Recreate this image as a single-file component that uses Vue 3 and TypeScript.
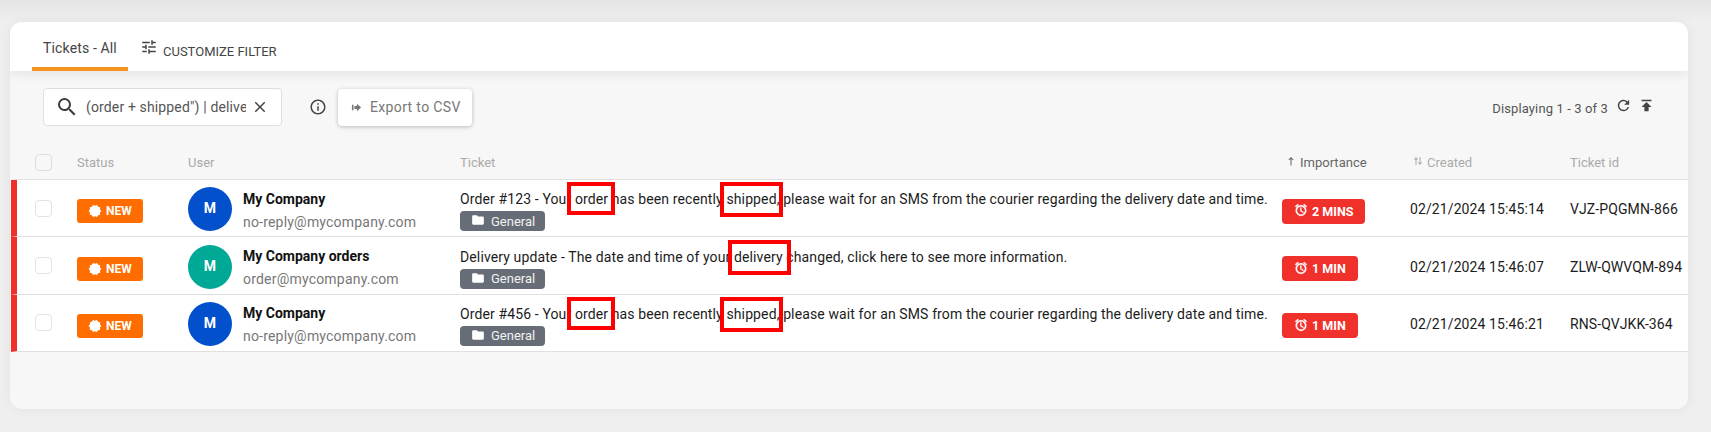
<script setup lang="ts">
type HitKind = 'order' | 'shipped' | 'delivery'

interface Part {
  text: string
  hit?: HitKind
}

interface Ticket {
  id: string
  name: string
  email: string
  color: string
  parts: Part[]
  wait: string
  created: string
}

const shippedTail = ' please wait for an SMS from the courier regarding the delivery date and time.'

const tickets: Ticket[] = [
  {
    id: 'VJZ-PQGMN-866',
    name: 'My Company',
    email: 'no-reply@mycompany.com',
    color: '#0250cc',
    parts: [
      { text: 'Order #123 - Your ' },
      { text: 'order', hit: 'order' },
      { text: ' has been recently ' },
      { text: 'shipped,', hit: 'shipped' },
      { text: shippedTail }
    ],
    wait: '2 MINS',
    created: '02/21/2024 15:45:14'
  },
  {
    id: 'ZLW-QWVQM-894',
    name: 'My Company orders',
    email: 'order@mycompany.com',
    color: '#00a896',
    parts: [
      { text: 'Delivery update - The date and time of your ' },
      { text: 'delivery', hit: 'delivery' },
      { text: ' changed, click here to see more information.' }
    ],
    wait: '1 MIN',
    created: '02/21/2024 15:46:07'
  },
  {
    id: 'RNS-QVJKK-364',
    name: 'My Company',
    email: 'no-reply@mycompany.com',
    color: '#0250cc',
    parts: [
      { text: 'Order #456 - Your ' },
      { text: 'order', hit: 'order' },
      { text: ' has been recently ' },
      { text: 'shipped,', hit: 'shipped' },
      { text: shippedTail }
    ],
    wait: '1 MIN',
    created: '02/21/2024 15:46:21'
  }
]
</script>

<template>
  <div class="page">
    <div class="card">
      <div class="tabs">
        <div class="tab">Tickets - All</div>
        <div class="filter">
          <svg class="filter-icon" viewBox="0 0 24 24"><path d="M3 17v2h6v-2H3zM3 5v2h10V5H3zm10 16v-2h8v-2h-8v-2h-2v6h2zM7 9v2H3v2h4v2h2V9H7zm14 4v-2H11v2h10zm-6-4h2V7h4V5h-4V3h-2v6z" /></svg>
          <span>CUSTOMIZE FILTER</span>
        </div>
      </div>

      <div class="toolbar">
        <div class="search">
          <svg class="search-icon" viewBox="0 0 24 24"><path d="M15.5 14h-.79l-.28-.27A6.471 6.471 0 0 0 16 9.5 6.5 6.5 0 1 0 9.5 16c1.61 0 3.09-.59 4.23-1.57l.27.28v.79l5 4.99L20.49 19l-4.99-5zm-6 0C7.01 14 5 11.99 5 9.5S7.01 5 9.5 5 14 7.01 14 9.5 11.99 14 9.5 14z" /></svg>
          <input class="search-text" type="text" readonly value='(order + shipped") | delivery' />
          <svg class="clear-icon" viewBox="0 0 24 24"><path d="M19 6.41 17.59 5 12 10.59 6.41 5 5 6.41 10.59 12 5 17.59 6.41 19 12 13.41 17.59 19 19 17.59 13.41 12z" /></svg>
        </div>
        <svg class="info-icon" viewBox="0 0 24 24"><path d="M11 7h2v2h-2zm0 4h2v6h-2zm1-9C6.48 2 2 6.48 2 12s4.48 10 10 10 10-4.48 10-10S17.52 2 12 2zm0 18c-4.41 0-8-3.59-8-8s3.59-8 8-8 8 3.59 8 8-3.59 8-8 8z" /></svg>
        <button class="export">
          <svg class="export-icon" viewBox="0 0 24 24"><path d="M2 6h3.500v12H2zM7.500 8.500H13V4l9 8-9 8v-4.500H7.500z" /></svg>
          Export to CSV
        </button>
        <div class="paging">
          <span>Displaying 1 - 3 of 3</span>
          <svg class="paging-icon" viewBox="0 0 24 24"><path d="M17.65 6.35A7.958 7.958 0 0 0 12 4c-4.420 0-7.990 3.580-7.990 8s3.570 8 7.990 8c3.730 0 6.840-2.550 7.730-6h-2.080A5.990 5.990 0 0 1 12 18c-3.310 0-6-2.690-6-6s2.690-6 6-6c1.660 0 3.140.690 4.220 1.780L13 11h7V4l-2.350 2.350z" /></svg>
          <svg class="paging-icon" viewBox="0 0 24 24"><path d="M5 4v2h14V4H5zm0 10h4v6h6v-6h4l-7-7-7 7z" /></svg>
        </div>
      </div>

      <div class="row head">
        <span class="check" />
        <span>Status</span>
        <span>User</span>
        <span>Ticket</span>
        <span class="sorted">
          <svg class="sort-icon" viewBox="0 0 24 24"><path d="M11 21V8L8.400 10.500 7 9l5-5 5 5-1.400 1.500L13 8v13z" /></svg>
          Importance
        </span>
        <span class="sortable">
          <svg class="sort-icon" viewBox="0 0 24 24"><path d="M7 20V8L5 10 3.800 8.800 8 4l4.200 4.800L11 10 9 8v12zM15 4v12l-2-2-1.200 1.200L16 20l4.200-4.800L19 14l-2 2V4z" /></svg>
          Created
        </span>
        <span>Ticket id</span>
      </div>

      <div v-for="ticket in tickets" :key="ticket.id" class="row item">
        <span class="check" />
        <div class="status">
          <span class="new">
            <svg class="new-icon" viewBox="0 0 24 24"><path d="M23 12l-2.440-2.780.340-3.680-3.610-.820-1.890-3.180L12 3 8.600 1.540 6.710 4.720l-3.610.810.340 3.680L1 12l2.440 2.780-.340 3.690 3.610.820 1.890 3.180L12 21l3.400 1.460 1.890-3.180 3.610-.820-.340-3.680L23 12z" /></svg>
            NEW
          </span>
        </div>
        <div class="user">
          <span class="avatar" :style="{ background: ticket.color }">M</span>
          <div class="who">
            <div class="name">{{ ticket.name }}</div>
            <div class="email">{{ ticket.email }}</div>
          </div>
        </div>
        <div class="ticket">
          <div class="subject">
            <template v-for="(part, index) in ticket.parts" :key="index">
              <span v-if="part.hit" :class="['hit', `hit-${part.hit}`]">{{ part.text }}</span>
              <template v-else>{{ part.text }}</template>
            </template>
          </div>
          <span class="tag">
            <svg class="tag-icon" viewBox="0 0 24 24"><path d="M10 4H4c-1.100 0-1.990.900-1.990 2L2 18c0 1.100.900 2 2 2h16c1.100 0 2-.900 2-2V8c0-1.100-.900-2-2-2h-8l-2-2z" /></svg>
            General
          </span>
        </div>
        <div class="importance">
          <span class="wait">
            <svg class="wait-icon" viewBox="0 0 24 24"><path d="M22 5.720l-4.600-3.860-1.290 1.530 4.600 3.860L22 5.720zM7.880 3.390L6.600 1.860 2 5.710l1.290 1.530 4.590-3.850zM12.500 8H11v6l4.750 2.850.750-1.230-4-2.370V8zM12 4c-4.970 0-9 4.030-9 9s4.030 9 9 9 9-4.030 9-9-4.030-9-9-9zm0 16c-3.870 0-7-3.130-7-7s3.130-7 7-7 7 3.130 7 7-3.130 7-7 7z" /></svg>
            {{ ticket.wait }}
          </span>
        </div>
        <div class="cell">{{ ticket.created }}</div>
        <div class="cell">{{ ticket.id }}</div>
      </div>
    </div>
  </div>
</template>

<style>
html,
body {
  margin: 0;
  background: #eeeeee;
}
</style>

<style scoped>
.page {
  box-sizing: border-box;
  height: 432px;
  padding: 22px 23px 23px 10px;
  overflow: hidden;
  font-family: Roboto, 'Liberation Sans', sans-serif;
  background: linear-gradient(#e4e4e4, #efefef 22px);
}

.card {
  height: 387px;
  border-radius: 12px;
  background: #f7f7f7;
  overflow: hidden;
  box-shadow: 0 0 14px rgba(0, 0, 0, 0.06);
}

.tabs {
  position: relative;
  display: flex;
  height: 49px;
  padding-left: 22px;
  background: #fff;
  box-shadow: 0 4px 10px rgba(0, 0, 0, 0.07);
}

.tab {
  box-sizing: border-box;
  width: 96px;
  height: 49px;
  padding-top: 18px;
  text-align: center;
  font-size: 14px;
  line-height: 16px;
  letter-spacing: 0.14px;
  color: #444;
  border-bottom: 4px solid #f6921e;
}

.filter {
  display: flex;
  align-items: center;
  gap: 5px;
  height: 49px;
  padding: 9px 0 0 12px;
  box-sizing: border-box;
  font-size: 13px;
  color: #444;
}

.filter-icon {
  width: 18px;
  height: 18px;
  margin-top: -9px;
  fill: #444;
}

.toolbar {
  display: flex;
  align-items: center;
  height: 38px;
  margin-top: 17px;
  padding-left: 33px;
}

.search {
  box-sizing: border-box;
  display: flex;
  align-items: center;
  width: 239px;
  height: 38px;
  padding-left: 11px;
  background: #fff;
  border: 1px solid #dfdfdf;
  border-radius: 4px;
}

.search-icon {
  flex: none;
  width: 24px;
  height: 24px;
  fill: #3c3c3c;
}

.search-text {
  box-sizing: border-box;
  width: 160px;
  margin-left: 7px;
  padding: 0;
  border: 0;
  outline: 0;
  background: transparent;
  font-family: inherit;
  font-size: 14px;
  letter-spacing: 0.14px;
  color: #555;
}

.clear-icon {
  flex: none;
  width: 18px;
  height: 18px;
  margin-left: 5px;
  fill: #444;
}

.info-icon {
  flex: none;
  width: 18px;
  height: 18px;
  margin-left: 27px;
  fill: #444;
}

.export {
  display: flex;
  align-items: center;
  gap: 8px;
  box-sizing: border-box;
  width: 134px;
  height: 37px;
  margin-left: 11px;
  padding: 0 0 0 13px;
  border: 0;
  border-radius: 4px;
  background: #fff;
  font-family: inherit;
  font-size: 14px;
  letter-spacing: 0.35px;
  color: #777;
  box-shadow: 0 1px 4px rgba(0, 0, 0, 0.25);
}

.export-icon {
  width: 11px;
  height: 11px;
  fill: #777;
}

.paging {
  display: flex;
  align-items: center;
  margin-left: auto;
  padding-right: 27px;
  font-size: 13px;
  letter-spacing: 0.12px;
  color: #555;
}

.paging span {
  margin-right: 7px;
  padding-top: 2px;
}

.paging-icon {
  width: 17px;
  height: 17px;
  margin-right: 6px;
  margin-top: -3px;
  fill: #444;
}

.row {
  display: grid;
  grid-template-columns: 42px 111px 272px 822px 128px 160px 1fr;
  align-items: center;
  margin-left: 1px;
  padding-left: 18px;
  white-space: nowrap;
}

.head {
  box-sizing: content-box;
  height: 33px;
  margin-top: 20px;
  border-left: 6px solid transparent;
  border-bottom: 1px solid #e0e0e0;
  font-size: 13px;
  color: #aaa;
}

.item {
  box-sizing: content-box;
  height: 56.35px;
  background: #fff;
  border-left: 6px solid #f0302a;
  border-bottom: 1px solid #e0e0e0;
}

.check {
  display: block;
  box-sizing: border-box;
  width: 17px;
  height: 17px;
  background: #fff;
  border: 1px solid #e2e2e2;
  border-radius: 4px;
}

.head .check {
  background: transparent;
  border-color: #ddd;
}

.sorted,
.sortable {
  display: flex;
  align-items: center;
  gap: 3px;
  margin-left: 3px;
}

.sorted {
  color: #666;
}

.sortable {
  margin-left: 2px;
}

.sort-icon {
  width: 12px;
  height: 12px;
  margin-top: -3px;
  fill: currentColor;
}

.status,
.importance {
  display: flex;
  padding-top: 6px;
}

.new {
  display: inline-flex;
  align-items: center;
  gap: 4px;
  box-sizing: border-box;
  width: 66px;
  height: 24px;
  padding-left: 11px;
  border-radius: 3px;
  background: #ff6d00;
  font-size: 12px;
  font-weight: 700;
  color: #fff;
}

.new-icon {
  width: 14px;
  height: 14px;
  fill: #fff;
}

.user {
  display: flex;
  align-items: center;
  gap: 11px;
}

.avatar {
  display: flex;
  align-items: center;
  justify-content: center;
  width: 44px;
  height: 44px;
  margin-top: 2px;
  padding-bottom: 2px;
  box-sizing: border-box;
  border-radius: 50%;
  font-size: 14px;
  font-weight: 700;
  color: #fff;
}

.who {
  padding-top: 4px;
}

.name {
  font-size: 14px;
  line-height: 18px;
  font-weight: 700;
  color: #111;
}

.email {
  margin-top: 5px;
  font-size: 14px;
  line-height: 18px;
  letter-spacing: 0.2px;
  color: #777;
}

.ticket {
  padding-top: 5px;
}

.subject {
  font-size: 14px;
  line-height: 18px;
  letter-spacing: 0.12px;
  color: #1c1c1c;
}

.hit {
  position: relative;
}

.hit::after {
  content: '';
  position: absolute;
  top: -9px;
  right: -7px;
  bottom: -8px;
  left: -8px;
  border: 4px solid #f00;
}

.hit-shipped::after {
  right: -3px;
  bottom: -10px;
  left: -6px;
}

.hit-delivery::after {
  right: -8px;
  bottom: -10px;
  left: -6px;
}

.tag {
  display: inline-flex;
  align-items: center;
  gap: 6px;
  box-sizing: border-box;
  width: 85px;
  height: 20px;
  margin-top: 3px;
  padding-left: 11px;
  border-radius: 4px;
  background: #666d76;
  font-size: 13px;
  color: #f2f2f2;
}

.tag-icon {
  width: 14px;
  height: 14px;
  margin-top: -2px;
  fill: #fff;
}

.wait {
  display: inline-flex;
  align-items: center;
  gap: 4px;
  box-sizing: border-box;
  height: 25px;
  padding: 0 12px;
  border-radius: 4px;
  background: #f0302a;
  font-size: 12.5px;
  font-weight: 700;
  color: #fff;
}

.wait-icon {
  width: 14px;
  height: 14px;
  margin-top: -2px;
  fill: #fff;
  stroke: #fff;
  stroke-width: 0.8;
}

.cell {
  padding-top: 2px;
  font-size: 14px;
  letter-spacing: 0.1px;
  color: #1c1c1c;
}
</style>
